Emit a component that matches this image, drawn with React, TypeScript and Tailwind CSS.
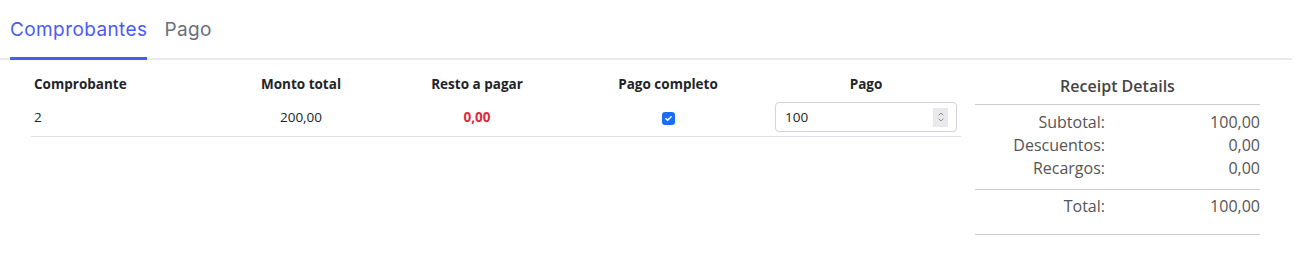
import React from 'react'

const ROWS = [{ comprobante: '2', monto: '200,00', resto: '0,00', completo: true, pago: '100' }]

const DETAILS = [
  { label: 'Subtotal:', value: '100,00' },
  { label: 'Descuentos:', value: '0,00' },
  { label: 'Recargos:', value: '0,00' },
]

export default function App() {
  return (
    <div className="w-[1294px] h-[258px] bg-white pt-[8px] font-['Open_Sans','Liberation_Sans',sans-serif] text-[#212529]">
      {/* Tabs */}
      <div className="flex pl-[10px] border-b-2 border-[#e8eaf0] mr-[2px]">
        <button className="-mb-[2px] h-[52px] pt-[8px] flex flex-col justify-start mr-[17px] border-b-[3px] border-[#4a5bf2] text-[19px] leading-[28px] font-['Inter',sans-serif] text-[#4a5bf2] tracking-[0.4px]">
          Comprobantes
        </button>
        <button className="-mb-[2px] h-[52px] pt-[8px] flex flex-col justify-start border-b-[3px] border-transparent text-[19px] leading-[28px] font-['Inter',sans-serif] text-[#6b6f78] tracking-[0.4px]">
          Pago
        </button>
      </div>

      <div className="flex items-start pl-[31px] pt-[10px]">
        {/* Table */}
        <table className="w-[930px] table-fixed border-collapse text-[13.5px]">
          <colgroup>
            <col className="w-[182px]" />
            <col className="w-[176px]" />
            <col className="w-[176px]" />
            <col className="w-[206px]" />
            <col className="w-[190px]" />
          </colgroup>
          <thead>
            <tr className="h-[29px] font-bold text-[#212529]">
              <th className="text-left pl-[3px]">Comprobante</th>
              <th className="text-center">Monto total</th>
              <th className="text-center">Resto a pagar</th>
              <th className="text-center">Pago completo</th>
              <th className="text-center">Pago</th>
            </tr>
          </thead>
          <tbody>
            {ROWS.map(r => (
              <tr key={r.comprobante} className="h-[37px] border-b border-[#dee2e6]">
                <td className="pl-[3px]">{r.comprobante}</td>
                <td className="text-center">{r.monto}</td>
                <td className="text-center font-bold text-[#e3263d]">{r.resto}</td>
                <td className="text-center">
                  <span className="inline-flex w-[13px] h-[13px] rounded-[3px] bg-[#1a6ef5] items-center justify-center align-middle">
                    <svg viewBox="0 0 12 12" className="w-[9px] h-[9px]" fill="none" stroke="white" strokeWidth="2" strokeLinecap="round" strokeLinejoin="round">
                      <path d="M2.5 6.2l2.3 2.2 4.7-4.8" />
                    </svg>
                  </span>
                </td>
                <td className="pl-[4px] pr-[4px]">
                  <div className="flex items-center h-[30px] w-[182px] border border-[#ced4da] rounded-[4px] pl-[9px] pr-[8px]">
                    <span className="flex-1">{r.pago}</span>
                    <span className="flex flex-col items-center justify-center w-[15px] h-[19px] bg-[#e9e9ed]">
                      <svg viewBox="0 0 10 14" className="w-[8px] h-[12px]" fill="none" stroke="#8a8a8f" strokeWidth="1.2">
                        <path d="M2 5l3-3 3 3M2 9l3 3 3-3" />
                      </svg>
                    </span>
                  </div>
                </td>
              </tr>
            ))}
          </tbody>
        </table>

        {/* Receipt details */}
        <div className="ml-[14px] w-[285px] text-[#555] pt-[4px]">
          <div className="text-center text-[16px] font-semibold text-[#444] pb-[6px]">Receipt Details</div>
          <div className="border-t border-[#ccc] pt-[6px] pb-[9px]">
            {DETAILS.map(d => (
              <div key={d.label} className="flex text-[16px] leading-[23px]">
                <span className="w-[130px] text-right">{d.label}</span>
                <span className="flex-1 text-right">{d.value}</span>
              </div>
            ))}
          </div>
          <div className="border-t border-[#ccc] pt-[5px] pb-[16px]">
            <div className="flex text-[16px] leading-[23px]">
              <span className="w-[130px] text-right">Total:</span>
              <span className="flex-1 text-right">100,00</span>
            </div>
          </div>
          <div className="border-t border-[#ccc]" />
        </div>
      </div>
    </div>
  )
}
